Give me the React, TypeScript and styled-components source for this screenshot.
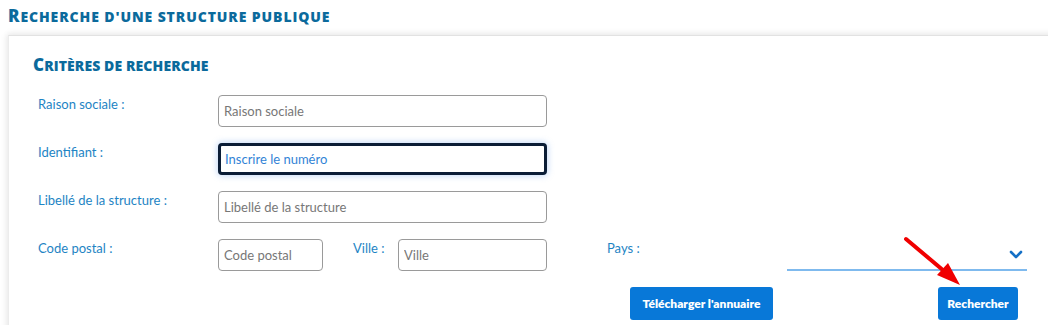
import React from "react";
import styled, { createGlobalStyle } from "styled-components";

const Global = createGlobalStyle`
  html, body { margin: 0; padding: 0; background: #ffffff; overflow: hidden; }
  body { font-family: Lato, "Open Sans", sans-serif; }
  * { box-sizing: border-box; }
`;

const Page = styled.div`
  position: relative;
  width: 1048px;
  height: 325px;
  overflow: hidden;
  padding: 6px 0 0 8px;
`;

const SmallCapsTitle = styled.h1<{ $spacing: number }>`
  margin: 0;
  font-family: "Open Sans", Lato, sans-serif;
  font-size: 14px;
  line-height: 20px;
  font-weight: 800;
  text-transform: uppercase;
  color: #0b6a9c;
  letter-spacing: ${(p) => p.$spacing}px;
  &::first-letter {
    font-size: 17px;
  }
`;

const Card = styled.section`
  margin: 8px -30px 0 0;
  background: #fff;
  border-top: 1px solid #e2e2e2;
  border-left: 1px solid #ececec;
  box-shadow: 0 -3px 6px rgba(0, 0, 0, 0.05), -3px 0 6px rgba(0, 0, 0, 0.05);
  padding: 18px 0 20px 24px;
`;

const CardHeading = styled(SmallCapsTitle).attrs({ as: "h2" })`
  margin: 0 0 18px;
  line-height: 22px;
`;

const Form = styled.div`
  display: flex;
  flex-direction: column;
  gap: 16px;
  padding-left: 5px;
`;

const Row = styled.div`
  display: flex;
  align-items: flex-start;
`;

const Label = styled.label<{ $w?: number }>`
  width: ${(p) => (p.$w ? `${p.$w}px` : "180px")};
  flex: none;
  padding-top: 1px;
  font-size: 13px;
  line-height: 16px;
  color: #1e84c4;
`;

const Input = styled.input<{ $w?: number; $focus?: boolean }>`
  width: ${(p) => (p.$w ? `${p.$w}px` : "329px")};
  height: 32px;
  flex: none;
  border-radius: 4px;
  border: ${(p) => (p.$focus ? "3px solid #0b1d36" : "1px solid #9a9a9a")};
  padding: 0 ${(p) => (p.$focus ? "4px" : "5px")};
  font-family: Lato, "Open Sans", sans-serif;
  font-size: 13px;
  color: ${(p) => (p.$focus ? "#3283d6" : "#666")};
  box-shadow: ${(p) => (p.$focus ? "0 0 6px 1px rgba(90, 150, 235, 0.35)" : "none")};
  outline: none;
  background: #fff;
  &::placeholder { color: #777; }
`;

const Spacer = styled.div<{ $w: number }>`
  width: ${(p) => p.$w}px;
  flex: none;
`;

const Select = styled.div`
  width: 240px;
  height: 32px;
  flex: none;
  border-bottom: 2px solid #7fbaee;
  display: flex;
  align-items: center;
  justify-content: flex-end;
  padding-right: 4px;
`;

const Buttons = styled.div`
  display: flex;
  margin-top: 16px;
  padding-left: 597px;
  gap: 165px;
`;

const Button = styled.button<{ $w: number }>`
  width: ${(p) => p.$w}px;
  height: 33px;
  padding: 0;
  border: none;
  border-radius: 3px;
  background: #0878d8;
  color: #fff;
  font-family: Lato, "Open Sans", sans-serif;
  font-weight: 800;
  font-size: 12px;
`;

const Arrow = styled.svg`
  position: absolute;
  left: 900px;
  top: 234px;
  pointer-events: none;
`;

export default function App() {
  return (
    <>
      <Global />
      <Page>
        <SmallCapsTitle $spacing={0.9}>Recherche d'une structure publique</SmallCapsTitle>
        <Card>
          <CardHeading $spacing={0.1}>Critères de recherche</CardHeading>
          <Form>
            <Row>
              <Label>Raison sociale :</Label>
              <Input placeholder="Raison sociale" />
            </Row>
            <Row>
              <Label>Identifiant :</Label>
              <Input $focus defaultValue="Inscrire le numéro" />
            </Row>
            <Row>
              <Label>Libellé de la structure :</Label>
              <Input placeholder="Libellé de la structure" />
            </Row>
            <Row>
              <Label>Code postal :</Label>
              <Input $w={105} placeholder="Code postal" />
              <Spacer $w={30} />
              <Label $w={45}>Ville :</Label>
              <Input $w={149} placeholder="Ville" />
              <Spacer $w={60} />
              <Label $w={180}>Pays :</Label>
              <Select>
                <svg width="14" height="9" viewBox="0 0 14 9">
                  <path d="M2 2 L7 7 L12 2" fill="none" stroke="#1570c6" strokeWidth="2.6" strokeLinecap="round" strokeLinejoin="round" />
                </svg>
              </Select>
            </Row>
          </Form>
          <Buttons>
            <Button $w={143}>Télécharger l'annuaire</Button>
            <Button $w={80}>Rechercher</Button>
          </Buttons>
        </Card>
        <Arrow width="70" height="60" viewBox="0 0 70 60">
          <line x1="6" y1="5" x2="44" y2="37" stroke="#f00000" strokeWidth="4" strokeLinecap="round" />
          <polygon points="60,51 37,41 48,29" fill="#f00000" />
        </Arrow>
      </Page>
    </>
  );
}
